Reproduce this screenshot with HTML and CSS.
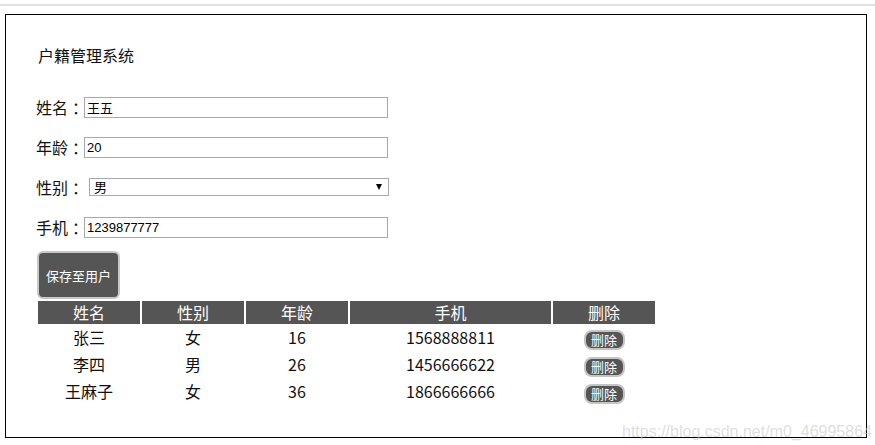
FILE: index.html
```html
<!DOCTYPE html>
<html lang="zh">
<head>
<meta charset="utf-8">
<title>户籍管理系统</title>
<link rel="stylesheet" href="styles.css">
</head>
<body>
<div class="topline"></div>
<div class="box">
  <h1 class="title">户籍管理系统</h1>
  <div class="row"><span class="label">姓名<span class="colon">：</span></span><input class="field" type="text" value="王五"></div>
  <div class="row"><span class="label">年龄<span class="colon">：</span></span><input class="field" type="text" value="20"></div>
  <div class="row"><span class="label">性别<span class="colon">：</span></span><span class="selwrap"><select class="sel"><option>男</option><option>女</option></select></span></div>
  <div class="row"><span class="label">手机<span class="colon">：</span></span><input class="field" type="text" value="1239877777"></div>
  <button class="save">保存至用户</button>
  <table class="tbl">
    <thead>
      <tr><th class="c1">姓名</th><th class="c1">性别</th><th class="c1">年龄</th><th class="c4">手机</th><th class="c1">删除</th></tr>
    </thead>
    <tbody>
      <tr><td>张三</td><td>女</td><td>16</td><td>1568888811</td><td><button class="del">删除</button></td></tr>
      <tr><td>李四</td><td>男</td><td>26</td><td>1456666622</td><td><button class="del">删除</button></td></tr>
      <tr><td>王麻子</td><td>女</td><td>36</td><td>1866666666</td><td><button class="del">删除</button></td></tr>
    </tbody>
  </table>
</div>
<div class="watermark">https://blog.csdn.net/m0_46995864</div>
</body>
</html>
```

FILE: styles.css
```css
html, body {
  margin: 0;
  padding: 0;
  background: #fff;
}
body {
  font-family: "Noto Sans CJK SC", "Liberation Sans", sans-serif;
  color: #111;
  position: relative;
  height: 445px;
  overflow: hidden;
}
.topline {
  margin-top: 4px;
  height: 2px;
  background: #e2e2e2;
}
.box {
  margin: 8px 8px 0 5px;
  border: 1px solid #000;
  height: 424px;
  box-sizing: border-box;
  padding: 0 0 0 30px;
}
.title {
  margin: 29px 0 0 2px;
  font-size: 16px;
  font-weight: normal;
  line-height: 22px;
  height: 22px;
}
.row {
  display: flex;
  align-items: center;
  height: 22px;
  margin-top: 18px;
  font-size: 16px;
}
.title + .row {
  margin-top: 30px;
}
.label {
  width: 48px;
  flex: none;
  line-height: 22px;
  white-space: nowrap;
}
.colon {
  margin-left: 4px;
}
.field {
  width: 304px;
  height: 21px;
  box-sizing: border-box;
  border: 1px solid #a9a9a9;
  padding: 0 2px;
  margin: 0;
  font-family: "Liberation Sans", "Noto Sans CJK SC", sans-serif;
  font-size: 13px;
  color: #000;
  outline: none;
}
.selwrap {
  position: relative;
  margin-left: 5px;
  display: flex;
  height: 18px;
}
.sel {
  appearance: none;
  -webkit-appearance: none;
  width: 300px;
  height: 18px;
  box-sizing: border-box;
  border: 1px solid #a9a9a9;
  border-radius: 0;
  background: #fff;
  padding: 0 4px;
  margin: 0;
  font-family: "Noto Sans CJK SC", sans-serif;
  font-size: 13px;
  line-height: 16px;
  color: #000;
  outline: none;
}
.selwrap::after {
  content: "";
  position: absolute;
  right: 7px;
  top: 6px;
  border-left: 3.5px solid transparent;
  border-right: 3.5px solid transparent;
  border-top: 6px solid #000;
}
.save {
  display: block;
  margin: 13px 0 0 1px;
  width: 83px;
  height: 48px;
  background: #555;
  color: #fff;
  border: 2px solid #c8c8c8;
  border-radius: 6px;
  font-family: "Noto Sans CJK SC", sans-serif;
  font-size: 13px;
  padding: 0;
}
.tbl {
  margin: 2px 0 0 0;
  border-collapse: separate;
  border-spacing: 2px 0;
  font-size: 16px;
}
.tbl th {
  background: #555;
  color: #fff;
  font-weight: normal;
  height: 23px;
  padding: 0;
  line-height: 23px;
}
.tbl .c1 { width: 102px; }
.tbl .c4 { width: 201px; }
.tbl td {
  text-align: center;
  height: 27px;
  padding: 0;
  line-height: 27px;
  color: #111;
}
.del {
  width: 41px;
  height: 20px;
  background: #555;
  color: #fff;
  border: 2px solid #c4c4c4;
  border-radius: 8px;
  font-family: "Noto Sans CJK SC", sans-serif;
  font-size: 13px;
  line-height: 15px;
  padding: 0;
  vertical-align: middle;
  margin: 0;
}
.watermark {
  position: absolute;
  left: 622px;
  top: 423px;
  font-family: "Liberation Sans", sans-serif;
  font-size: 16px;
  color: rgba(200, 200, 200, 0.6);
  white-space: nowrap;
}
```
